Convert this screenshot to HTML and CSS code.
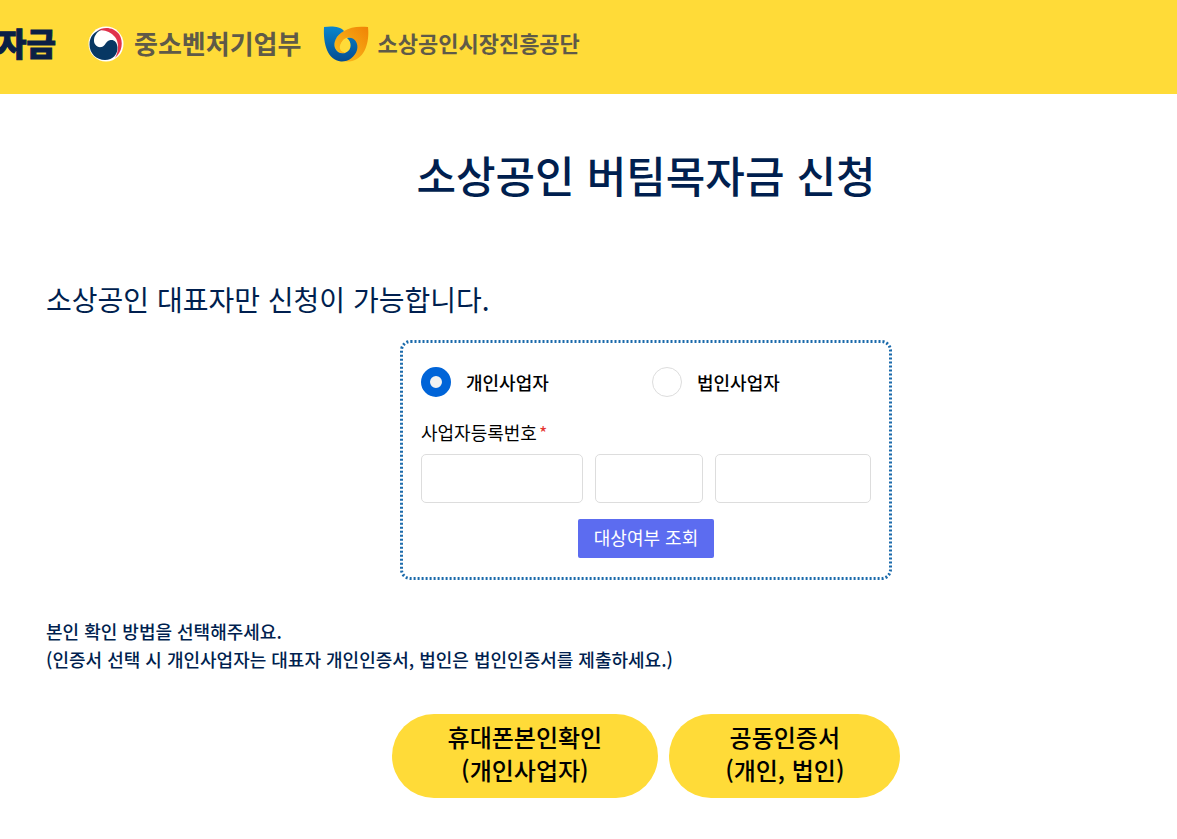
FILE: index.html
```html
<!DOCTYPE html>
<html lang="ko">
<head>
    <meta charset="UTF-8">
    <meta name="viewport" content="width=device-width, initial-scale=1.0">
    <title>소상공인 버팀목자금 신청</title>
    <link rel="stylesheet" href="styles.css">
</head>
<body>

    <!-- Header -->
    <header class="header">
        <div class="site-logo"><span>자금</span></div>
        <a href="#" class="org org-ministry">
            <svg class="org-mark" width="36" height="36" viewBox="0 0 36 36" aria-hidden="true">
                <circle cx="18" cy="18" r="17.5" fill="#fff"/>
                <path d="M9 5C15 0 26 1 31 8C36 16 34 26 27 32C31 25 31 16 27 11C22 5 15 3 9 5Z" fill="#e0324b"/>
                <path d="M14 3.500C6 5 1.500 11 1.500 18.500C1.500 27.500 8.500 34 17 34C25 34 30 28 29.500 21C29 16 26 13.500 22.500 14C17.500 14.500 18 20 13.500 21C9 22 5.500 18 6 13.500C6.500 9 9.500 5.500 14 3.500Z" fill="#073763"/>
            </svg>
            <span>중소벤처기업부</span>
        </a>
        <a href="#" class="org org-semas">
            <svg class="org-mark" width="46" height="38" viewBox="0 0 46 38" aria-hidden="true">
                <defs>
                    <linearGradient id="blue" x1="0" y1="0" x2="0" y2="1">
                        <stop offset="0" stop-color="#0a86ce"/>
                        <stop offset="1" stop-color="#054c91"/>
                    </linearGradient>
                    <linearGradient id="orange" x1="1" y1="0" x2="0" y2="1">
                        <stop offset="0" stop-color="#f08205"/>
                        <stop offset="1" stop-color="#fcc21d"/>
                    </linearGradient>
                </defs>
                <path d="M45 2C35 1 27 2 21 6C13 10 10 18 12 23C14 27 18 29 22 28C16 26 16 14 25 12.500C34 13 36 24 30 30C28 33 25 35 22 36.500C40 38 47 20 45 2Z" fill="url(#orange)"/>
                <path d="M1 2C8 1 17 1 21 6C13 10 10 18 12 23C14 28 19 29.500 23 27.500C29 25 29 17 24 13C31 11 36 18 34 25C32 32 25 37 18 36.500C5 35 0 20 1 2Z" fill="url(#blue)"/>
                <ellipse cx="21.500" cy="21" rx="4.500" ry="6" transform="rotate(20 21.500 21)" fill="#ffdb38"/>
            </svg>
            <span>소상공인시장진흥공단</span>
        </a>
    </header>

    <!-- Application -->
    <main class="container">
        <h1>소상공인 버팀목자금 신청</h1>
        <h2>소상공인 대표자만 신청이 가능합니다.</h2>

        <form class="check-form">
            <svg class="check-border" aria-hidden="true"><rect/></svg>
            <div class="type-row">
                <label><input type="radio" name="bizType" value="personal" checked>개인사업자</label>
                <label><input type="radio" name="bizType" value="corporate">법인사업자</label>
            </div>
            <label class="field-label" for="bizNo1">사업자등록번호<span class="required">*</span></label>
            <div class="number-row">
                <input type="text" id="bizNo1" maxlength="3">
                <input type="text" maxlength="2" aria-label="사업자등록번호 가운데 2자리">
                <input type="text" maxlength="5" aria-label="사업자등록번호 끝 5자리">
            </div>
            <button type="button" class="search-button">대상여부 조회</button>
        </form>

        <p class="guide">
            본인 확인 방법을 선택해주세요.<br>
            (인증서 선택 시 개인사업자는 대표자 개인인증서, 법인은 법인인증서를 제출하세요.)
        </p>

        <div class="auth-row">
            <button type="button" class="auth-button">휴대폰본인확인<br>(개인사업자)</button>
            <button type="button" class="auth-button">공동인증서<br>(개인, 법인)</button>
        </div>
    </main>

</body>
</html>
```
FILE: styles.css
```css
* {
    box-sizing: border-box;
}
body {
    margin: 0;
    background-color: #fff;
    color: #000;
    font-family: "Noto Sans CJK KR", sans-serif;
}
button, input {
    font-family: inherit;
}
.header {
    display: flex;
    align-items: center;
    height: 94px;
    padding-bottom: 6px;
    background-color: #ffdb38;
}
.header span {
    padding-bottom: 4px;
}
.site-logo {
    display: flex;
    justify-content: flex-end;
    width: 56px;
    overflow: hidden;
    color: #0b1f45;
    font-size: 32px;
    font-weight: 900;
    line-height: 40px;
    white-space: nowrap;
    -webkit-text-stroke: 1px #0b1f45;
}
.org {
    display: flex;
    align-items: center;
    color: #5f5a48;
    font-weight: 700;
    text-decoration: none;
    white-space: nowrap;
}
.org-ministry {
    gap: 10px;
    margin-left: 32px;
    font-size: 26px;
}
.org-semas {
    gap: 8px;
    margin-left: 22px;
    font-size: 22px;
}
.org-mark {
    flex-shrink: 0;
}
.container {
    display: flex;
    flex-direction: column;
    align-items: center;
    padding-left: 115px;
}
/* Left-aligned texts start further out than the centred column */
h2, .guide {
    align-self: flex-start;
    margin-left: -69px;
    color: #001f4f;
}
h1 {
    margin: 48px 0 0;
    color: #001f4f;
    font-size: 43px;
    font-weight: 500;
    line-height: 64px;
}
h2 {
    margin-top: 72px;
    margin-bottom: 0;
    font-size: 28px;
    font-weight: 400;
    line-height: 42px;
}
.check-form {
    position: relative;
    display: flex;
    flex-direction: column;
    width: 492px;
    margin-top: 20px;
    padding: 26px 21px 22px;
}
.check-border {
    position: absolute;
    inset: 0;
    width: 100%;
    height: 100%;
    pointer-events: none;
}
.check-border rect {
    x: 1.5px;
    y: 1.5px;
    rx: 9px;
    width: calc(100% - 3px);
    height: calc(100% - 3px);
    fill: none;
    stroke: #1a6aab;
    stroke-width: 3px;
    stroke-dasharray: 2 2;
}
.type-row {
    display: grid;
    grid-template-columns: 231px 1fr;
}
.type-row label {
    display: flex;
    align-items: center;
    gap: 15px;
    font-size: 18px;
    font-weight: 500;
    line-height: 32px;
}
.type-row input {
    appearance: none;
    width: 30px;
    height: 30px;
    margin: 0;
    border: 1px solid #ddd;
    border-radius: 50%;
    background-color: #fff;
}
.type-row input:checked {
    border: 9px solid #0064d8;
    background-color: #f2f2f2;
}
.field-label {
    margin-top: 20px;
    font-size: 18px;
    line-height: 28px;
}
.required {
    margin-left: 2px;
    color: #e5342f;
    font-size: 18px;
}
.number-row {
    display: grid;
    grid-template-columns: 162fr 108fr 156fr;
    gap: 12px;
    margin-top: 8px;
}
.number-row input {
    width: 100%;
    height: 49px;
    padding: 0 12px;
    border: 1px solid #ddd;
    border-radius: 5px;
    font-size: 18px;
}
.search-button {
    align-self: center;
    height: 39px;
    margin-top: 16px;
    padding: 0 16px 3px;
    border: none;
    border-radius: 2px;
    background-color: #5c6cf0;
    color: #fff;
    font-size: 18px;
    cursor: pointer;
}
.guide {
    margin-top: 37px;
    margin-bottom: 0;
    font-size: 18px;
    font-weight: 500;
    line-height: 28px;
}
.auth-row {
    display: flex;
    gap: 11px;
    margin-top: 41px;
}
.auth-button {
    padding: 6px 56px 12px;
    border: none;
    border-radius: 42px;
    background-color: #ffdb38;
    color: #000;
    font-size: 24px;
    font-weight: 500;
    line-height: 33px;
    cursor: pointer;
}
```
